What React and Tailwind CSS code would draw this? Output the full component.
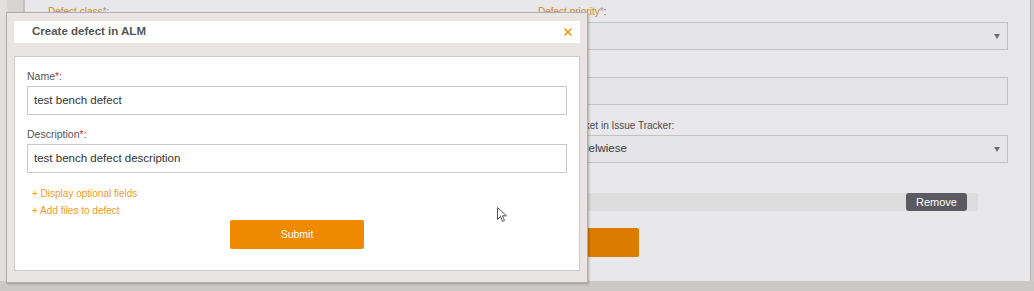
import React from "react";
import { X } from "lucide-react";

const Caret = () => (
  <span className="w-0 h-0 border-l-[3.5px] border-r-[3.5px] border-t-[5px] border-l-transparent border-r-transparent border-t-[#707070]" />
);

const BgSelect = ({ text }) => (
  <div className="h-[28px] border border-[#c2c1c3] bg-[#e5e4e6] flex items-center justify-between pl-[8px] pr-[7px] text-[11.5px] text-[#3a3a3a]">
    <span>{text}</span>
    <Caret />
  </div>
);

const BgInput = () => <div className="h-[28px] border border-[#c2c1c3] bg-[#e5e4e6]" />;

const BgLabel = ({ children, orange }) => (
  <div className={`h-[12px] leading-[12px] text-[10px] ${orange ? "text-[#cf8a2e]" : "text-[#4a4a4a]"}`}>
    {children}
  </div>
);

const Field = ({ label, value }) => (
  <div className="flex flex-col">
    <label className="h-[13px] leading-[13px] text-[10.5px] text-[#555]">
      {label}
      <span className="text-[#e02424]">*</span>:
    </label>
    <div className="mt-[3px] h-[29px] border border-[#c9c9c9] bg-white flex items-center pl-[6px] text-[11.5px] text-[#333]">
      {value}
    </div>
  </div>
);

export default function App() {
  return (
    <div className="relative w-[1034px] h-[291px] overflow-hidden bg-[#ccc8c8] font-['Liberation_Sans',Arial,sans-serif]">
      <div className="flex h-[281px]">
        {/* left strip */}
        <div className="w-[7px] bg-[#e3dfdf]" />
        <div className="w-[16px] bg-[#d8d4d4]" />
        <div className="w-[2px] bg-[#c3bfbf]" />

        {/* main panel */}
        <div className="w-[1005px] bg-[#e8e7e9] pl-[23px] grid grid-cols-[490px_470px]">
          <div className="flex flex-col pt-[6px]">
            <BgLabel orange>Defect class<span className="text-[#9a9a9a]">*</span>:</BgLabel>
            <div className="mt-[4px]">
              <BgSelect text="" />
            </div>
          </div>

          <div className="flex flex-col pt-[6px]">
            <BgLabel orange>
              Defect priority<span className="text-[#9a9a9a]">*</span>
              <span className="text-[#4a4a4a]">:</span>
            </BgLabel>
            <div className="mt-[4px]">
              <BgSelect text="" />
            </div>
            <div className="mt-[13px]">
              <BgLabel>Owner:</BgLabel>
            </div>
            <div className="mt-[2px]">
              <BgInput />
            </div>
            <div className="mt-[15px] pl-[4px]">
              <BgLabel>Create ticket in Issue Tracker:</BgLabel>
            </div>
            <div className="mt-[3px]">
              <BgSelect text="Test-Spielwiese" />
            </div>
            <div className="mt-[30px] w-[440px] h-[18px] bg-[#dcdcdd] flex justify-end pr-[11px]">
              <div className="w-[61px] h-[18px] rounded-[3px] bg-[#5b5a60] text-white text-[11px] flex items-center justify-center">
                Remove
              </div>
            </div>
            <div className="mt-[17px] w-[101px] h-[29px] rounded-[2px] bg-[#d97c00]" />
          </div>
        </div>

        <div className="w-[1px] bg-[#b9b5b5]" />
        <div className="flex-1 bg-[#d0cccc]" />
      </div>

      {/* modal */}
      <div className="absolute left-[6px] top-[12px] w-[582px] h-[271px] border border-[#b3aeae] bg-[#e9e5e5] shadow-[1px_1px_2px_rgba(0,0,0,0.25)] pt-[8px] pl-[7px] pr-[7px] flex flex-col">
        <div className="h-[22px] bg-white flex items-center justify-between pl-[18px] pr-[6px]">
          <span className="text-[11.5px] font-bold text-[#555]">Create defect in ALM</span>
          <X size={12} strokeWidth={3} className="text-[#f08a00]" />
        </div>

        <div className="mt-[13px] h-[215px] border border-[#cacaca] bg-white px-[12px] pt-[13px] flex flex-col">
          <Field label="Name" value="test bench defect" />
          <div className="mt-[13px]">
            <Field label="Description" value="test bench defect description" />
          </div>
          <div className="mt-[14px] pl-[5px] flex flex-col gap-[3px] text-[10px] leading-[14px] text-[#f29a26]">
            <span>+ Display optional fields</span>
            <span>+ Add files to defect</span>
          </div>
          <div className="mt-[2px] flex justify-center">
            <button className="w-[134px] h-[29px] rounded-[2px] bg-[#ef8a00] text-white text-[10.5px]">
              Submit
            </button>
          </div>
        </div>
      </div>

      {/* mouse cursor */}
      <svg className="absolute left-[497px] top-[207px]" width="11" height="16" viewBox="0 0 11 16">
        <path d="M0.5 0.5 L0.5 12.5 L3.5 9.5 L5.5 14.5 L7.5 13.5 L5.5 8.8 L9.5 8.8 Z" fill="#fff" stroke="#555" strokeWidth="1" strokeLinejoin="round" />
      </svg>
    </div>
  );
}
